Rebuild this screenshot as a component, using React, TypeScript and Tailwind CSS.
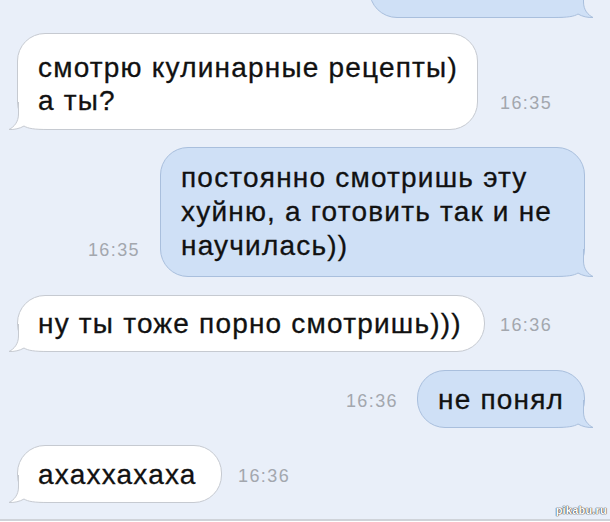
import React from "react";

type Side = "in" | "out";

// хвостик пузыря (рисуется под текстом, в нижнем углу)
function Tail({ side }: { side: Side }) {
  const fill = side === "in" ? "#ffffff" : "#cfe0f6";
  const stroke = side === "in" ? "#c6cad1" : "#a9bfdd";
  return (
    <svg
      width="40"
      height="30"
      viewBox="0 0 40 30"
      className={
        side === "in"
          ? "absolute left-[-10px] bottom-[-1px]"
          : "absolute right-[-10px] bottom-[-1px] -scale-x-100"
      }
    >
      <path
        d="M10.5 2 V14 C10.5 22 6 27 1 29.5 C6 29.8 12 28.5 16 26 C20 28.5 26 29.5 40 29.5 L40 2 Z"
        fill={fill}
      />
      <path
        d="M10.5 2 V14 C10.5 22 6 27 1 29.5 C6 29.8 12 28.5 16 26 C20 28.5 26 29.5 40 29.5"
        fill="none"
        stroke={stroke}
        strokeWidth="1"
      />
    </svg>
  );
}

function Bubble({
  side,
  w,
  h,
  children,
}: {
  side: Side;
  w: string;
  h: string;
  children?: React.ReactNode;
}) {
  return (
    <div
      className={`relative shrink-0 rounded-[28px] border flex flex-col justify-center pl-[20px] ${w} ${h} ${
        side === "in"
          ? "bg-white border-[#c6cad1]"
          : "bg-[#cfe0f6] border-[#a9bfdd]"
      }`}
    >
      <Tail side={side} />
      <div className="relative text-[28px] leading-[33px] tracking-[1.2px] text-[#111] [-webkit-text-stroke:0.3px_#111]">
        {children}
      </div>
    </div>
  );
}

function Time({ children }: { children: React.ReactNode }) {
  return (
    <div className="mb-[16px] text-[18px] leading-[22px] tracking-[1.4px] text-[#a3a7ae]">
      {children}
    </div>
  );
}

export default function App() {
  return (
    <div
      className="relative h-[522px] w-[610px] overflow-hidden bg-[#e9eff9] flex flex-col pl-[17px] pr-[25px]"
      style={{ fontFamily: '"Liberation Sans", Arial, sans-serif' }}
    >
      {/* кусок предыдущего сообщения */}
      <div className="flex justify-end mt-[-42px]">
        <Bubble side="out" w="w-[216px]" h="h-[60px]" />
      </div>

      <div className="flex items-end gap-[22px] mt-[15px]">
        <Bubble side="in" w="w-[461px]" h="h-[97px]">
          <div className="pt-[5px]">
            смотрю кулинарные рецепты)
            <br />а ты?
          </div>
        </Bubble>
        <Time>16:35</Time>
      </div>

      <div className="flex items-end justify-end gap-[20px] mt-[17px]">
        <Time>16:35</Time>
        <Bubble side="out" w="w-[425px]" h="h-[130px]">
          <div className="leading-[34px]">
            постоянно смотришь эту
            <br />
            хуйню, а готовить так и не
            <br />
            научилась))
          </div>
        </Bubble>
      </div>

      <div className="flex items-end gap-[15px] mt-[18px]">
        <Bubble side="in" w="w-[468px]" h="h-[57px]">
          ну ты тоже порно смотришь)))
        </Bubble>
        <Time>16:36</Time>
      </div>

      <div className="flex items-end justify-end gap-[19px] mt-[18px]">
        <Time>16:36</Time>
        <Bubble side="out" w="w-[168px]" h="h-[58px]">
          не понял
        </Bubble>
      </div>

      <div className="flex items-end gap-[16px] mt-[17px]">
        <Bubble side="in" w="w-[205px]" h="h-[58px]">
          ахаххахаха
        </Bubble>
        <Time>16:36</Time>
      </div>

      <div className="absolute left-0 right-0 bottom-0 h-[3px] border-t-2 border-[#cfd3d9] bg-white" />
      <div className="absolute right-[3px] bottom-[5px] text-[11px] leading-[13px] font-bold tracking-[0.2px] text-white [text-shadow:0_0_1px_#444,0_0_1px_#444,0_0_1px_#444]">
        pikabu.ru
      </div>
    </div>
  );
}
